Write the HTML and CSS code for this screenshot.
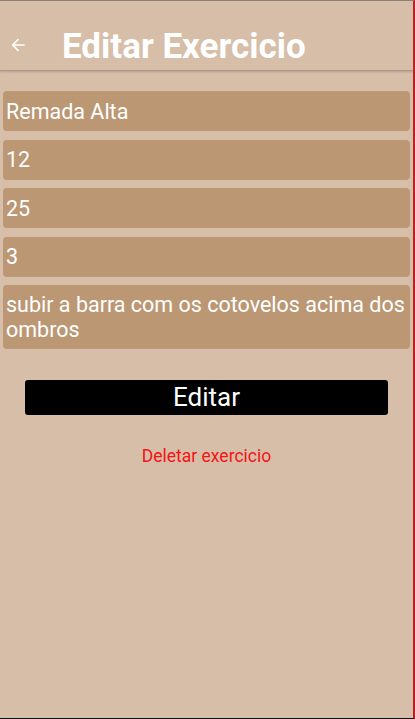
FILE: index.html
```html
<!DOCTYPE html>
<html lang="pt">
<head>
<meta charset="utf-8">
<title>Editar Exercicio</title>
<link rel="stylesheet" href="styles.css">
</head>
<body>
<div class="screen">
  <header class="topbar">
    <span class="back">
      <svg width="14" height="14" viewBox="0 0 14 14" aria-hidden="true">
        <path d="M13 7H1.8M7 1.6L1.6 7L7 12.4" fill="none" stroke="#fff" stroke-width="1.6" stroke-linecap="round" stroke-linejoin="round"/>
      </svg>
    </span>
    <h1 class="title">Editar Exercicio</h1>
  </header>
  <main class="content">
    <div class="fields">
      <div class="field">Remada Alta</div>
      <div class="field">12</div>
      <div class="field">25</div>
      <div class="field">3</div>
      <div class="field">subir a barra com os cotovelos acima dos ombros</div>
    </div>
    <button class="btn-edit">Editar</button>
    <a class="delete">Deletar exercicio</a>
  </main>
</div>
</body>
</html>
```
FILE: styles.css
```css
* { box-sizing: border-box; }
html, body { margin: 0; padding: 0; }
body {
  background: #d6bea8;
  font-family: Roboto, "Liberation Sans", sans-serif;
}
.screen {
  width: 415px;
  height: 719px;
  border-top: 1px solid #8f8175;
  border-right: 2px solid #b5221f;
  border-bottom: 1px solid #111;
  background: #d6bea8;
  display: flex;
  flex-direction: column;
}
.topbar {
  height: 70px;
  display: flex;
  align-items: center;
  border-bottom: 1px solid #a8978a;
  box-shadow: 0 1px 2px rgba(120, 100, 85, 0.35);
  padding-top: 22px;
}
.back {
  width: 14px;
  height: 14px;
  margin-left: 11px;
  display: flex;
  margin-top: -3px;
}
.title {
  margin: 0 0 0 37px;
  color: #fff;
  font-size: 35px;
  font-weight: 700;
  line-height: 40px;
}
.content {
  padding: 20px 3px 0 3px;
  display: flex;
  flex-direction: column;
}
.fields {
  display: flex;
  flex-direction: column;
  gap: 8.5px;
}
.field {
  background: #bb9774;
  border-radius: 4px;
  min-height: 40px;
  padding: 7px 3px;
  color: #fff;
  font-size: 21.5px;
  line-height: 25px;
  display: flex;
  align-items: center;
  width: 407px;
}
.btn-edit {
  margin: 31px 0 0 22px;
  width: 363px;
  height: 35px;
  background: #000;
  color: #fff;
  border: none;
  border-radius: 3px;
  font-family: Roboto, "Liberation Sans", sans-serif;
  font-size: 26px;
  line-height: 35px;
  padding: 0;
}
.delete {
  margin-top: 30px;
  align-self: center;
  color: #f41414;
  font-size: 17.5px;
  line-height: 22px;
  width: 407px;
  text-align: center;
}
```
